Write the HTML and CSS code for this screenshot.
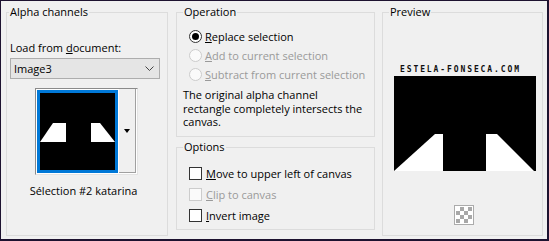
FILE: index.html
```html
<!DOCTYPE html>
<html lang="en">
  <head>
    <meta charset="UTF-8" />
    <meta name="viewport" content="width=device-width, initial-scale=1.0" />
    <title>Load Selection From Alpha Channel</title>
    <link rel="stylesheet" href="styles.css">
  </head>
  <body>
    <div class="dialog">
      <fieldset class="group alpha-group">
        <legend>Alpha channels</legend>
        <div class="doc-label">Load from <u>d</u>ocument:</div>
        <div class="select">
          <span>Image3</span>
          <svg class="chevron" width="9" height="5" viewBox="0 0 9 5">
            <path d="M0.5 0.5 L4.5 4.5 L8.5 0.5" fill="none" stroke="#444" />
          </svg>
        </div>
        <div class="thumb-picker">
          <div class="thumb">
            <svg width="75" height="77" viewBox="0 0 75 77">
              <rect width="75" height="77" fill="#000" />
              <polygon points="0,49 13,30 26,30 26,49" fill="#fff" />
              <polygon points="51,30 60,30 75,49 51,49" fill="#fff" />
            </svg>
          </div>
          <div class="thumb-drop"><span class="drop-arrow"></span></div>
        </div>
        <div class="thumb-caption">Sélection #2 katarina</div>
      </fieldset>

      <div class="middle">
        <fieldset class="group operation-group">
          <legend>Operation</legend>
          <div class="radio-list">
            <div class="radio-row">
              <span class="radio checked"></span>
              <span><u>R</u>eplace selection</span>
            </div>
            <div class="radio-row disabled">
              <span class="radio"></span>
              <span><u>A</u>dd to current selection</span>
            </div>
            <div class="radio-row disabled">
              <span class="radio"></span>
              <span><u>S</u>ubtract from current selection</span>
            </div>
          </div>
          <p class="note">The original alpha channel<br>rectangle completely intersects the<br>canvas.</p>
        </fieldset>

        <fieldset class="group options-group">
          <legend>Options</legend>
          <div class="check-list">
            <div class="check-row">
              <span class="checkbox"></span>
              <span><u>M</u>ove to upper left of canvas</span>
            </div>
            <div class="check-row disabled">
              <span class="checkbox"></span>
              <span><u>C</u>lip to canvas</span>
            </div>
            <div class="check-row">
              <span class="checkbox"></span>
              <span><u>I</u>nvert image</span>
            </div>
          </div>
        </fieldset>
      </div>

      <fieldset class="group preview-group">
        <legend>Preview</legend>
        <div class="watermark">ESTELA-FONSECA.COM</div>
        <div class="preview-image">
          <svg width="142" height="95" viewBox="0 0 142 95">
            <rect width="142" height="95" fill="#000" />
            <polygon points="0,95 41,58 49,58 49,95" fill="#fff" />
            <polygon points="92,58 103,58 140,95 92,95" fill="#fff" />
          </svg>
        </div>
        <div class="checker-icon"><span></span></div>
      </fieldset>
    </div>
  </body>
</html>
```

FILE: styles.css
```css
body {
  margin: 0;
  font-family: "Open Sans", "Noto Sans", sans-serif;
  font-size: 11px;
  color: #000;
}
u {
  text-decoration: underline;
  text-underline-offset: 1px;
}
.dialog {
  width: 549px;
  height: 241px;
  box-sizing: border-box;
  border-style: solid;
  border-color: #1d1230;
  border-width: 1px 2px 2px 1px;
  background: #f0f0f0;
  display: flex;
  align-items: flex-start;
  padding: 3px 0 0 5px;
}
.group {
  margin: 0;
  padding: 0;
  border: 1px solid #dcdcdc;
  min-width: 0;
  box-sizing: border-box;
}
.group legend {
  padding: 0 1px;
  margin-left: 6px;
  line-height: 16px;
}
.alpha-group {
  width: 162px;
  height: 232px;
}
.alpha-group legend {
  margin-left: 2px;
}
.doc-label {
  margin: 20px 0 0 3px;
  line-height: 16px;
}
.select {
  margin: 2px 0 0 3px;
  width: 150px;
  height: 21px;
  box-sizing: border-box;
  border: 1px solid #adadad;
  background: #e5e5e5;
  display: flex;
  align-items: center;
  justify-content: space-between;
  padding: 0 5px 0 3px;
}
.thumb-picker {
  margin: 9px 0 0 28px;
  width: 103px;
  height: 87px;
  box-sizing: border-box;
  border: 1px solid #e3e3e3;
  border-top-color: #8a8a8a;
  border-left-color: #8a8a8a;
  background: #fff;
  display: flex;
  align-items: flex-start;
}
.thumb {
  margin: 1px 0 0 1px;
  border: 3px solid #0078d7;
  width: 75px;
  height: 77px;
}
.thumb svg {
  display: block;
}
.thumb-drop {
  margin-left: 1px;
  width: 17px;
  height: 84px;
  box-sizing: border-box;
  background: #f0f0f0;
  border-right: 1px solid #a0a0a0;
  border-bottom: 1px solid #a0a0a0;
  display: flex;
  align-items: center;
  justify-content: center;
}
.drop-arrow {
  width: 0;
  height: 0;
  border-top: 4px solid #000;
  border-left: 3px solid transparent;
  border-right: 3px solid transparent;
}
.thumb-caption {
  margin-top: 8px;
  line-height: 16px;
  text-align: center;
  padding-right: 7px;
}
.middle {
  margin-left: 8px;
  width: 199px;
  display: flex;
  flex-direction: column;
  gap: 2px;
}
.operation-group {
  height: 133px;
}
.options-group {
  height: 91px;
}
.radio-list {
  margin-top: 7px;
}
.radio-row,
.check-row {
  display: flex;
  align-items: center;
  height: 19px;
  padding-left: 12px;
}
.check-list {
  margin-top: 8px;
}
.check-row {
  height: 21px;
}
.radio {
  width: 13px;
  height: 13px;
  box-sizing: border-box;
  border: 1px solid #333;
  border-radius: 50%;
  background: #fff;
  margin-right: 3px;
  display: flex;
  align-items: center;
  justify-content: center;
}
.radio.checked::after {
  content: "";
  width: 7px;
  height: 7px;
  border-radius: 50%;
  background: #000;
}
.checkbox {
  width: 13px;
  height: 13px;
  box-sizing: border-box;
  border: 1px solid #333;
  background: #fff;
  margin-right: 4px;
}
.disabled {
  color: #9a9a9a;
}
.disabled .radio,
.disabled .checkbox {
  border-color: #cccccc;
  background: #fafafa;
}
.note {
  margin: 4px 0 0 6px;
  line-height: 13.5px;
}
.preview-group {
  margin-left: 7px;
  width: 161px;
  height: 232px;
}
.watermark {
  margin: 45px 0 0 17px;
  font-family: "DejaVu Sans Mono", monospace;
  font-weight: bold;
  font-size: 8px;
  line-height: 10px;
  letter-spacing: 1.9px;
  color: #111;
}
.preview-image {
  margin: 1px 0 0 11px;
  width: 142px;
  height: 95px;
}
.preview-image svg {
  display: block;
}
.checker-icon {
  margin: 34px 0 0 71px;
  width: 20px;
  height: 20px;
  box-sizing: border-box;
  border: 1px solid #ababab;
  padding: 1px;
  background: #fff;
}
.checker-icon span {
  display: block;
  width: 16px;
  height: 16px;
  background: repeating-conic-gradient(#a8a8a8 0 25%, #fff 0 50%) 0 0 / 8px 8px;
}
```
